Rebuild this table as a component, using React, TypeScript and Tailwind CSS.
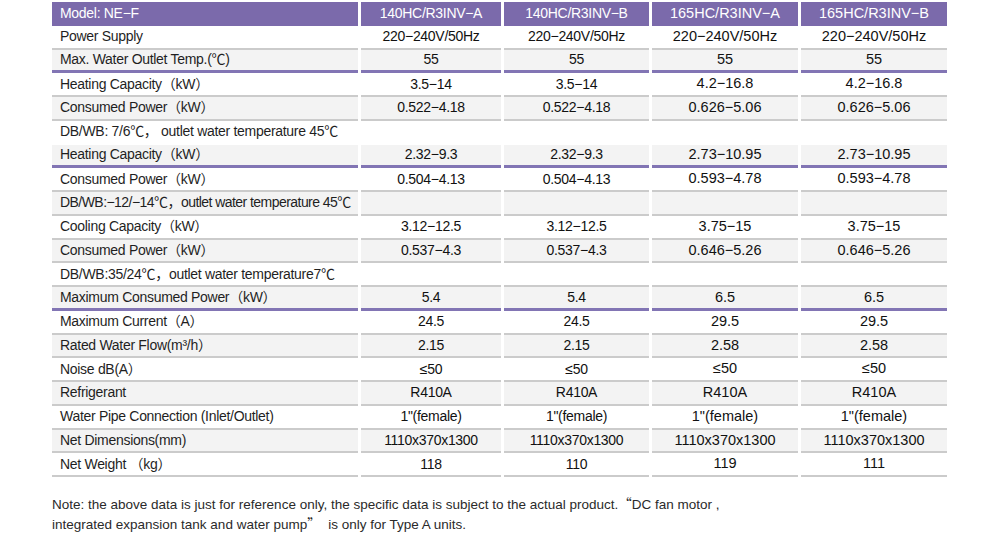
type Line = 'gray' | 'purple' | 'none';

interface SpecRow {
  label: string;
  values: string[];
  shade: boolean;
  line: Line;
  tight?: boolean;
}

const rows: SpecRow[] = [
  { label: 'Power Supply', values: ['220−240V/50Hz', '220−240V/50Hz', '220−240V/50Hz', '220−240V/50Hz'], shade: false, line: 'gray' },
  { label: 'Max. Water Outlet Temp.(℃)', values: ['55', '55', '55', '55'], shade: true, line: 'purple' },
  { label: 'Heating Capacity（kW）', values: ['3.5−14', '3.5−14', '4.2−16.8', '4.2−16.8'], shade: false, line: 'gray' },
  { label: 'Consumed Power（kW）', values: ['0.522−4.18', '0.522−4.18', '0.626−5.06', '0.626−5.06'], shade: true, line: 'gray' },
  { label: 'DB/WB: 7/6℃，  outlet water temperature 45℃', values: ['', '', '', ''], shade: false, line: 'none' },
  { label: 'Heating Capacity（kW）', values: ['2.32−9.3', '2.32−9.3', '2.73−10.95', '2.73−10.95'], shade: true, line: 'purple' },
  { label: 'Consumed Power（kW）', values: ['0.504−4.13', '0.504−4.13', '0.593−4.78', '0.593−4.78'], shade: false, line: 'gray' },
  { label: 'DB/WB:−12/−14℃，outlet water temperature 45℃', values: ['', '', '', ''], shade: true, line: 'gray', tight: true },
  { label: 'Cooling Capacity（kW）', values: ['3.12−12.5', '3.12−12.5', '3.75−15', '3.75−15'], shade: false, line: 'gray' },
  { label: 'Consumed Power（kW）', values: ['0.537−4.3', '0.537−4.3', '0.646−5.26', '0.646−5.26'], shade: true, line: 'gray' },
  { label: 'DB/WB:35/24℃，outlet water temperature7℃', values: ['', '', '', ''], shade: false, line: 'gray' },
  { label: 'Maximum Consumed Power（kW）', values: ['5.4', '5.4', '6.5', '6.5'], shade: true, line: 'purple' },
  { label: 'Maximum Current（A）', values: ['24.5', '24.5', '29.5', '29.5'], shade: false, line: 'gray' },
  { label: 'Rated Water Flow(m³/h）', values: ['2.15', '2.15', '2.58', '2.58'], shade: true, line: 'gray' },
  { label: 'Noise dB(A）', values: ['≤50', '≤50', '≤50', '≤50'], shade: false, line: 'gray' },
  { label: 'Refrigerant', values: ['R410A', 'R410A', 'R410A', 'R410A'], shade: true, line: 'gray' },
  { label: 'Water Pipe Connection (Inlet/Outlet)', values: ['1"(female)', '1"(female)', '1"(female)', '1"(female)'], shade: false, line: 'gray' },
  { label: 'Net Dimensions(mm)', values: ['1110x370x1300', '1110x370x1300', '1110x370x1300', '1110x370x1300'], shade: true, line: 'gray' },
  { label: 'Net Weight （kg）', values: ['118', '110', '119', '111'], shade: false, line: 'gray' },
];

const models = ['140HC/R3INV−A', '140HC/R3INV−B', '165HC/R3INV−A', '165HC/R3INV−B'];

// column widths in the picture: 306 | 140 | 145 | 146 | 146, 3px apart
const valueWidths = ['w-[140px]', 'w-[145px]', 'w-[146px]', 'w-[146px]'];
const valueText = [
  'text-[14px] tracking-[-0.3px]',
  'text-[14px] tracking-[-0.3px]',
  'text-[14.5px]',
  'text-[14.5px]',
];

const cellBase = 'h-[23.75px] flex items-center whitespace-nowrap overflow-hidden';

function cellClass(row: SpecRow) {
  const bg = row.shade ? 'bg-[#f3f3f3]' : 'bg-white';
  const line =
    row.line === 'purple'
      ? 'border-b-[3px] border-[#8275b4]'
      : row.line === 'gray'
        ? 'border-b-2 border-[#cbcbcb]'
        : 'border-b-2 border-transparent';
  return `${cellBase} ${bg} ${line}`;
}

const cjk = { fontFamily: '"Noto Sans CJK SC", sans-serif' };

export default function App() {
  return (
    <div
      className="w-[1000px] h-[541px] bg-white text-[#1f1f1f] pl-[52px] pt-[2px]"
      style={{ fontFamily: '"Liberation Sans", Arial, "Noto Sans CJK SC", sans-serif' }}
    >
      <div className="flex flex-col">
        <div className="flex gap-[3px]">
          <div className={`${cellBase} w-[306px] bg-[#7b6aab] text-white text-[14px] tracking-[-0.3px] pl-2`}>
            Model: NE−F
          </div>
          {models.map((m, i) => (
            <div
              key={m}
              className={`${cellBase} ${valueWidths[i]} ${valueText[i]} bg-[#7b6aab] text-white justify-center`}
            >
              {m}
            </div>
          ))}
        </div>

        {rows.map((row, r) => (
          <div key={r} className="flex gap-[3px]">
            <div
              className={`${cellClass(row)} w-[306px] text-[14px] pl-2 ${row.tight ? 'tracking-[-0.55px]' : 'tracking-[-0.3px]'}`}
            >
              {row.label}
            </div>
            {row.values.map((v, i) => (
              <div key={i} className={`${cellClass(row)} ${valueWidths[i]} ${valueText[i]} justify-center text-[#111]`}>
                {v}
              </div>
            ))}
          </div>
        ))}
      </div>

      <div className="mt-[17px] text-[13.5px] leading-[18px] text-[#2a2a2a]">
        <p>
          Note: the above data is just for reference only, the specific data is subject to the actual product.
          <span style={cjk}>“</span>DC fan motor ,
        </p>
        <p>
          integrated expansion tank and water pump<span style={cjk}>”</span>&nbsp; is only for Type A units.
        </p>
      </div>
    </div>
  );
}
